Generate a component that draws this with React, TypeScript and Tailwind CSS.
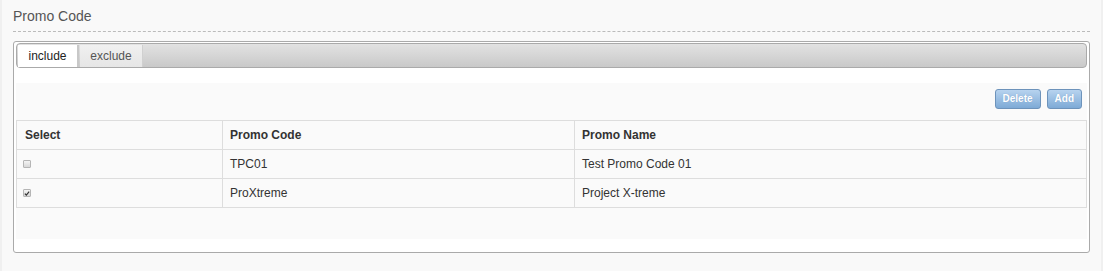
const rows = [
  { checked: false, code: "TPC01", name: "Test Promo Code 01" },
  { checked: true, code: "ProXtreme", name: "Project X-treme" },
];

const Check = ({ checked }: { checked: boolean }) => (
  <span className="inline-flex w-[8px] h-[8px] items-center justify-center rounded-[1px] border border-[#b5b5b5] bg-gradient-to-b from-[#f4f4f4] to-[#d8d8d8]">
    {checked && (
      <svg width="7" height="7" viewBox="0 0 7 7">
        <path d="M1 3.6 L2.7 5.3 L6 1.2" fill="none" stroke="#333" strokeWidth="1.4" />
      </svg>
    )}
  </span>
);

const Btn = ({ label }: { label: string }) => (
  <button className="h-[20px] px-[7px] rounded-[3px] border border-[#6d93bb] bg-gradient-to-b from-[#b7d3ef] to-[#7eaad6] text-[10px] font-bold text-white [text-shadow:0_0_1px_#7a9ec4] leading-none">
    {label}
  </button>
);

export default function App() {
  return (
    <div className="min-h-[271px] bg-[#f9f9f9] border-l-2 border-r-2 border-[#f0f0f0] px-[11px] pt-[8px] font-['Liberation_Sans',Arial,sans-serif]">
      <h3 className="text-[14px] leading-[17px] text-[#555]">Promo Code</h3>
      <div className="mt-[6px] border-b border-dashed border-[#bbb]" />

      <div className="mt-[9px] h-[212px] rounded-[3px] border border-[#aaa] bg-white px-[2px] pt-[1px]">
        {/* tabs */}
        <div className="h-[25px] rounded-[4px] border border-[#aaa] bg-gradient-to-b from-[#e2e2e2] to-[#c9c9c9] pl-[1px] pt-[1px] flex items-end">
          <div className="h-[22px] w-[61px] flex items-center justify-center bg-white border-r-2 border-[#c8c8c8] text-[12px] text-[#222]">
            include
          </div>
          <div className="ml-[1px] h-[22px] w-[63px] flex items-center justify-center bg-gradient-to-b from-[#f0f0f0] to-[#e6e6e6] border-r border-[#d0d0d0] text-[12px] text-[#555]">
            exclude
          </div>
        </div>

        {/* content */}
        <div className="mt-[15px] h-[156px] bg-[#fafafa] pt-[6px]">
          <div className="flex justify-end gap-[6px] pr-[5px]">
            <Btn label="Delete" />
            <Btn label="Add" />
          </div>
          <table className="mt-[11px] w-full border-collapse text-[12px] text-[#333]">
            <thead>
              <tr className="h-[29px]">
                <th className="w-[206px] border border-[#ddd] px-[8px] text-left font-bold">Select</th>
                <th className="w-[352px] border border-[#ddd] px-[7px] text-left font-bold">Promo Code</th>
                <th className="border border-[#ddd] px-[7px] text-left font-bold">Promo Name</th>
              </tr>
            </thead>
            <tbody>
              {rows.map((r) => (
                <tr key={r.code} className="h-[29px]">
                  <td className="border border-[#ddd] px-[6px] align-middle">
                    <div className="flex items-center">
                      <Check checked={r.checked} />
                    </div>
                  </td>
                  <td className="border border-[#ddd] px-[7px]">{r.code}</td>
                  <td className="border border-[#ddd] px-[7px]">{r.name}</td>
                </tr>
              ))}
            </tbody>
          </table>
        </div>
      </div>
    </div>
  );
}
